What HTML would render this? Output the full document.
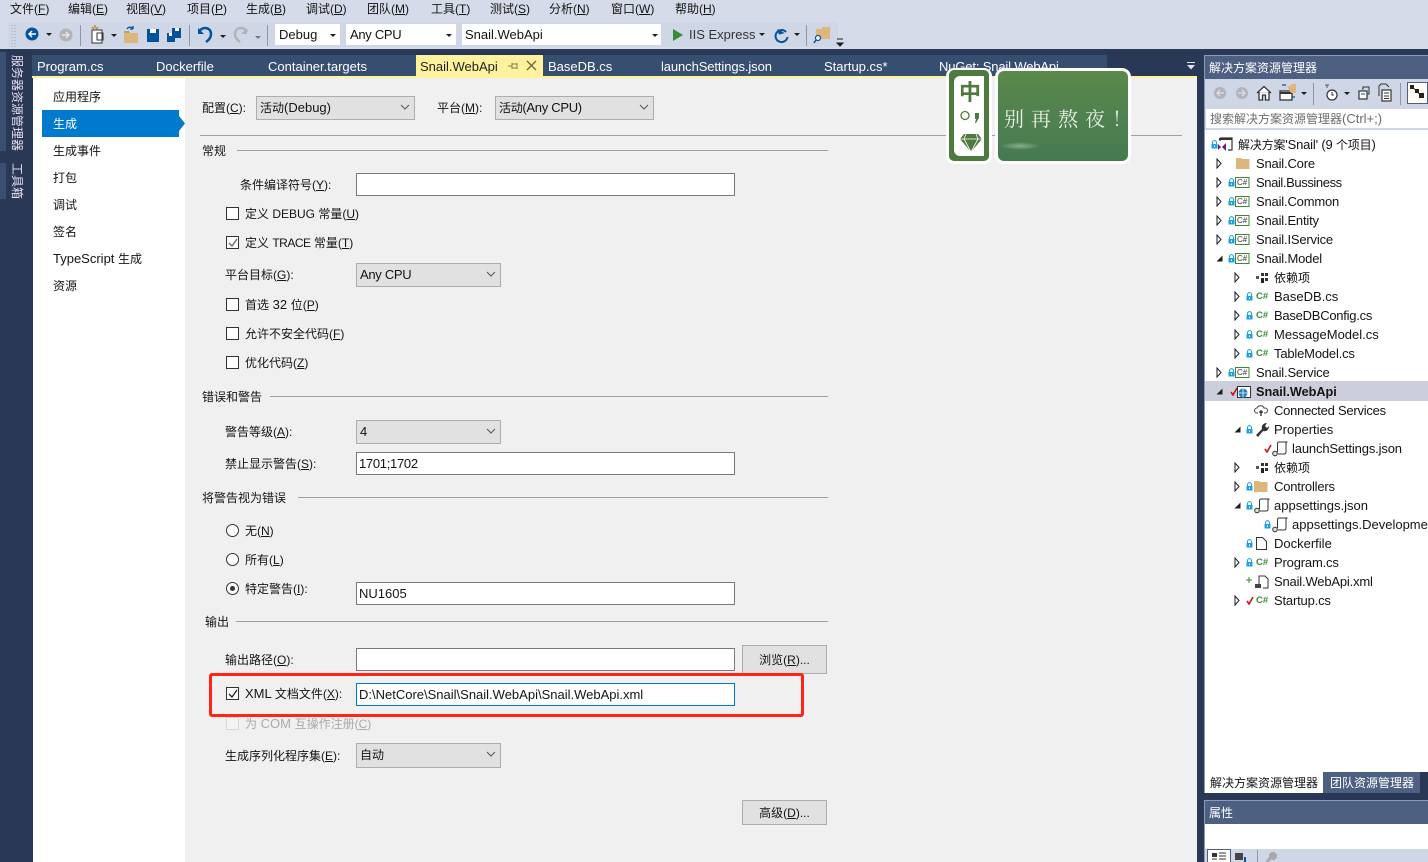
<!DOCTYPE html>
<html><head><meta charset="utf-8"><style>
html,body{margin:0;padding:0}
body{width:1428px;height:862px;overflow:hidden;position:relative;background:#293955;font:13px/16px "Liberation Sans","Noto Sans CJK SC",sans-serif;color:#141414}
.b{position:absolute;box-sizing:border-box}
.t{position:absolute;white-space:nowrap;line-height:16px;margin-top:1px}
.r{letter-spacing:-.18px}
i{font-style:normal;font-size:12px}
.l{background:#a0a0a0;height:1px;position:absolute}
.dd{position:absolute;box-sizing:border-box;background:#e1e1e1;border:1px solid #adadad;line-height:22px;padding-left:3px;white-space:nowrap}
.dd svg{position:absolute;right:4px;top:7px}
.in{position:absolute;box-sizing:border-box;background:#fff;border:1px solid #7a7a7a;line-height:21px;padding-left:2px;left:356px;width:379px;height:23px;white-space:nowrap}
.cb{position:absolute;box-sizing:border-box;left:226px;width:13px;height:13px;border:1px solid #333;background:#fff}
.rd{position:absolute;box-sizing:border-box;left:226px;width:13px;height:13px;border:1px solid #333;background:#fff;border-radius:50%}
.btn{position:absolute;box-sizing:border-box;left:742px;width:85px;background:#e1e1e1;border:1px solid #adadad;text-align:center;white-space:nowrap}
.m{top:0}
.tab{top:58px;color:#fff}
.s{position:absolute}
.w{color:#fff}
.ms{position:absolute;width:0;height:0;border-left:3px solid transparent;border-right:3px solid transparent;border-top:3px solid #1e1e1e}
.v{position:absolute;white-space:nowrap;writing-mode:vertical-rl;text-orientation:sideways;line-height:14px;font-size:12px;color:#e8dcf2;left:10px}
</style></head><body>
<svg width="0" height="0" style="position:absolute"><defs>
<symbol id="chev" viewBox="0 0 10 7"><path d="M1 1l4 4 4-4" fill="none" stroke="#555" stroke-width="1"/></symbol>
<symbol id="lock" viewBox="0 0 7 9"><path d="M1.500 4V2.600a2 2 0 014 0V4" fill="none" stroke="#1ba1e2" stroke-width="1"/><rect x="0.500" y="4" width="6" height="4.500" fill="#1ba1e2"/><rect x="3" y="5.500" width="1" height="1.500" fill="#fff"/></symbol>
<symbol id="exp" viewBox="0 0 7 11"><path d="M1 1v9l4-4.500z" fill="#fff" stroke="#1e1e1e" stroke-width="1"/></symbol>
<symbol id="col" viewBox="0 0 7 7"><path d="M6.500 0.500v6h-6z" fill="#1e1e1e"/></symbol>
<symbol id="proj" viewBox="0 0 15 11"><rect x="0.500" y="0.500" width="13.500" height="10" fill="#fff" stroke="#388a34"/><text x="2" y="8.200" font-size="8" font-family="Liberation Sans" fill="#333">C#</text></symbol>
<symbol id="cs" viewBox="0 0 12 9"><text x="0" y="8" font-size="9.500" font-weight="bold" font-family="Liberation Sans" fill="#388a34">C#</text></symbol>
<symbol id="fold" viewBox="0 0 14 12"><path d="M0 1h5l1 1h7.500v10H0z" fill="#dcb67a"/></symbol>
<symbol id="dep" viewBox="0 0 14 10"><rect x="7" y="0" width="3" height="3" fill="#333"/><rect x="11" y="0" width="3" height="3" fill="#333"/><rect x="2" y="3" width="3" height="3" fill="#555"/><rect x="7" y="5" width="3" height="5" fill="#222"/><rect x="11" y="5" width="3" height="3" fill="#333"/></symbol>
<symbol id="json" viewBox="0 0 16 16"><path d="M6 13h6c1.500 0 2-1 2-2V2.500c0-.7.500-1.500 1.500-1.500H7C6 1 5.500 2 5.500 3v8" fill="none" stroke="#333"/><circle cx="3" cy="12.500" r="2.300" fill="#ddd" stroke="#333"/></symbol>
<symbol id="chk" viewBox="0 0 8 9"><path d="M1 5l2 3 4-7" fill="none" stroke="#d0121a" stroke-width="1.600"/></symbol>
</defs></svg>

<!-- menu bar -->
<div class="b" style="left:0;top:0;width:1428px;height:49px;background:#d6dbe9"></div>
<div class="b" style="left:8px;top:22px;width:830px;height:25px;background:#cfd6e5"></div>
<div class="t m" style="left:10px"><i>文件(<u>F</u>)</i></div>
<div class="t m" style="left:68px"><i>编辑(<u>E</u>)</i></div>
<div class="t m" style="left:126px"><i>视图(<u>V</u>)</i></div>
<div class="t m" style="left:187px"><i>项目(<u>P</u>)</i></div>
<div class="t m" style="left:246px"><i>生成(<u>B</u>)</i></div>
<div class="t m" style="left:306px"><i>调试(<u>D</u>)</i></div>
<div class="t m" style="left:367px"><i>团队(<u>M</u>)</i></div>
<div class="t m" style="left:431px"><i>工具(<u>T</u>)</i></div>
<div class="t m" style="left:490px"><i>测试(<u>S</u>)</i></div>
<div class="t m" style="left:549px"><i>分析(<u>N</u>)</i></div>
<div class="t m" style="left:611px"><i>窗口(<u>W</u>)</i></div>
<div class="t m" style="left:675px"><i>帮助(<u>H</u>)</i></div>

<!-- toolbar -->
<svg class="s" style="left:0;top:22px" width="850" height="27">
<path d="M12 3v22M15 3v22" stroke="#9aa3b8" stroke-width="1" stroke-dasharray="1 2"/>
<circle cx="32" cy="12" r="6.500" fill="#00539c"/><path d="M36 12h-7m3-3l-3 3 3 3" stroke="#fff" stroke-width="1.500" fill="none"/>
<path d="M46 11h6l-3 3z" fill="#1e1e1e"/>
<circle cx="66" cy="13" r="6.500" fill="#b4b4b8"/><path d="M62 13h7m-3-3l3 3-3 3" stroke="#e6e6e6" stroke-width="1.500" fill="none"/>
<path d="M80.500 3v21" stroke="#8e96a8"/>
<path d="M92 8v13h10V8z" fill="#fff" stroke="#333"/><path d="M92 5l2 2M95 3v3M98 5l-2 2" stroke="#c08a2e" stroke-width="1.500"/>
<rect x="97" y="11" width="6" height="7" fill="none" stroke="#333"/>
<path d="M111 12h6l-3 3z" fill="#1e1e1e"/>
<path d="M124 11h14v10h-14z" fill="#dcb67a"/><path d="M124 11v-2h5l1 2" fill="#c9a063"/><path d="M127 7c2-3 5-2 6 0m0 0v-3m0 3h-3" stroke="#00539c" fill="none" stroke-width="1.300"/>
<path d="M147 7h12v13h-12z" fill="#00539c"/><rect x="150" y="7" width="6" height="4" fill="#fff"/>
<path d="M167 11h8v9h-8z" fill="#00539c"/><path d="M172 6h9v10h-6v-5h-3z" fill="#00539c"/><rect x="175" y="6" width="4" height="3" fill="#fff"/><rect x="169" y="11" width="3" height="3" fill="#fff"/>
<path d="M189.500 3v21" stroke="#8e96a8"/>
<path d="M199 10c3-6 12-5 12 2 0 3-2 6-5 8" fill="none" stroke="#00539c" stroke-width="2.500"/><path d="M198 6v6h6z" fill="#00539c"/>
<path d="M220 13h6l-3 3z" fill="#1e1e1e"/>
<path d="M235 10c3-6 12-5 12 2 0 3-2 6-5 8" fill="none" stroke="#b4b4b8" stroke-width="2.500" transform="matrix(-1 0 0 1 482 0)"/><path d="M247 6v6h-6z" fill="#b4b4b8"/>
<path d="M255 14h6l-3 3z" fill="#777"/>
<path d="M267.500 3v21" stroke="#8e96a8"/>
<path d="M673 7v12l10-6z" fill="#388a34"/>
<path d="M759 11h6l-3 3z" fill="#1e1e1e"/>
<path d="M786 10a6 6 0 10 1.500 5" fill="none" stroke="#00539c" stroke-width="2"/><path d="M778 6v6h6z" fill="#00539c" transform="rotate(-15 781 9)"/>
<path d="M794 11h6l-3 3z" fill="#1e1e1e"/>
<path d="M806.500 3v21" stroke="#8e96a8"/>
<path d="M816 7h6v-2h8v12h-14z" fill="#dcb67a"/><circle cx="818" cy="16" r="2.500" fill="#fff" stroke="#00539c" stroke-width="1.200"/><path d="M816 18l-2 3" stroke="#00539c" stroke-width="1.500"/>
<path d="M837 17h6M837 21h6l-3 3h0z" stroke="#1e1e1e" fill="#1e1e1e"/>
</svg>
<div class="b" style="left:275px;top:24px;width:65px;height:21px;background:#fff;padding-left:4px;line-height:21px">Debug</div><div class="ms" style="left:330px;top:34px"></div>
<div class="b" style="left:346px;top:24px;width:110px;height:21px;background:#fff;padding-left:4px;line-height:21px;letter-spacing:-.3px">Any CPU</div><div class="ms" style="left:446px;top:34px"></div>
<div class="b" style="left:462px;top:24px;width:199px;height:21px;background:#fff;padding-left:3px;line-height:21px">Snail.WebApi</div><div class="ms" style="left:652px;top:34px"></div>
<div class="t" style="left:689px;top:26px;color:#333">IIS Express</div>

<!-- left strip -->
<div class="b" style="left:0;top:52px;width:6px;height:99px;background:#3a4f72"></div>
<div class="b" style="left:0;top:163px;width:6px;height:36px;background:#3a4f72"></div>
<div class="v" style="top:55px">服务器资源管理器</div>
<div class="v" style="top:163px">工具箱</div>

<!-- tabs -->
<div class="b" style="left:32px;top:55px;width:1075px;height:21px;background:#364e6f"></div>
<div class="b" style="left:32px;top:76px;width:1165px;height:2px;background:#fff29d"></div>
<div class="b" style="left:416px;top:55px;width:127px;height:21px;background:#fff29d"></div>
<div class="t tab" style="left:37px">Program.cs</div>
<div class="t tab" style="left:156px">Dockerfile</div>
<div class="t tab" style="left:268px">Container.targets</div>
<div class="t tab" style="left:420px;color:#1e1e1e">Snail.WebApi</div>
<div class="t tab" style="left:548px">BaseDB.cs</div>
<div class="t tab" style="left:661px;letter-spacing:-.1px">launchSettings.json</div>
<div class="t tab" style="left:824px">Startup.cs*</div>
<div class="t tab" style="left:939px;letter-spacing:-.15px">NuGet: Snail.WebApi</div>
<svg class="s" style="left:505px;top:59px" width="36" height="14"><path d="M3 7h4M7 4v6M7 5h5v4H7M12 4v6" fill="none" stroke="#8a7c46"/><path d="M22 2l9 9M31 2l-9 9" stroke="#6b6442" stroke-width="1.300"/></svg>
<svg class="s" style="left:1186px;top:62px" width="10" height="9"><path d="M1 0.500h8" stroke="#dfe3ee"/><path d="M1 3h8L5 7.500z" fill="#dfe3ee"/></svg>

<!-- content -->
<div class="b" style="left:33px;top:78px;width:1164px;height:784px;background:#f0f0f0"></div>
<div class="b" style="left:33px;top:78px;width:152px;height:784px;background:#fff"></div>
<div class="b" style="left:42px;top:110px;width:137px;height:27px;background:#007acc"></div>
<svg class="s" style="left:179px;top:116px" width="6" height="15"><path d="M0 0l6 7.500-6 7.500z" fill="#007acc"/></svg>
<div class="t" style="left:53px;top:88px"><i>应用程序</i></div>
<div class="t" style="left:53px;top:115px;color:#fff"><i>生成</i></div>
<div class="t" style="left:53px;top:142px"><i>生成事件</i></div>
<div class="t" style="left:53px;top:169px"><i>打包</i></div>
<div class="t" style="left:53px;top:196px"><i>调试</i></div>
<div class="t" style="left:53px;top:223px"><i>签名</i></div>
<div class="t" style="left:53px;top:250px">TypeScript <i>生成</i></div>
<div class="t" style="left:53px;top:277px"><i>资源</i></div>

<!-- form -->
<div class="t" style="left:202px;top:99px"><i>配置(<u>C</u>):</i></div>
<div class="dd" style="left:256px;top:96px;width:159px;height:24px"><i>活动</i>(Debug)<svg width="10" height="7"><use href="#chev"/></svg></div>
<div class="t" style="left:437px;top:99px"><i>平台(<u>M</u>):</i></div>
<div class="dd" style="left:495px;top:96px;width:159px;height:24px;letter-spacing:-.3px"><i>活动</i>(Any CPU)<svg width="10" height="7"><use href="#chev"/></svg></div>
<div class="l" style="left:200px;top:135px;width:982px"></div>

<div class="t" style="left:202px;top:142px"><i>常规</i></div><div class="l" style="left:237px;top:150px;width:591px"></div>
<div class="t" style="left:240px;top:176px"><i>条件编译符号(<u>Y</u>):</i></div>
<div class="in" style="top:173px"></div>
<div class="cb" style="top:207px"></div>
<div class="t" style="left:245px;top:205px"><i>定义 DEBUG 常量(<u>U</u>)</i></div>
<div class="cb" style="top:236px"><svg class="s" style="left:1px;top:1px" width="10" height="10"><path d="M1 5l3 3 5-7" fill="none" stroke="#666" stroke-width="1.300"/></svg></div>
<div class="t" style="left:245px;top:234px"><i>定义 <span style="letter-spacing:-.5px">TRACE</span> 常量(<u>T</u>)</i></div>
<div class="t" style="left:225px;top:266px"><i>平台目标(<u>G</u>):</i></div>
<div class="dd" style="left:356px;top:263px;width:145px;height:24px;letter-spacing:-.3px">Any CPU<svg width="10" height="7"><use href="#chev"/></svg></div>
<div class="cb" style="top:298px"></div>
<div class="t" style="left:245px;top:296px"><i>首选</i> 32 <i>位(<u>P</u>)</i></div>
<div class="cb" style="top:327px"></div>
<div class="t" style="left:245px;top:325px"><i>允许不安全代码(<u>F</u>)</i></div>
<div class="cb" style="top:356px"></div>
<div class="t" style="left:245px;top:354px"><i>优化代码(<u>Z</u>)</i></div>

<div class="t" style="left:202px;top:388px"><i>错误和警告</i></div><div class="l" style="left:270px;top:396px;width:558px"></div>
<div class="t" style="left:225px;top:423px"><i>警告等级(<u>A</u>):</i></div>
<div class="dd" style="left:356px;top:420px;width:145px;height:24px">4<svg width="10" height="7"><use href="#chev"/></svg></div>
<div class="t" style="left:225px;top:455px"><i>禁止显示警告(<u>S</u>):</i></div>
<div class="in" style="top:452px;letter-spacing:-.3px">1701;1702</div>

<div class="t" style="left:202px;top:489px"><i>将警告视为错误</i></div><div class="l" style="left:298px;top:497px;width:530px"></div>
<div class="rd" style="top:524px"></div>
<div class="t" style="left:245px;top:522px"><i>无(<u>N</u>)</i></div>
<div class="rd" style="top:553px"></div>
<div class="t" style="left:245px;top:551px"><i>所有(<u>L</u>)</i></div>
<div class="rd" style="top:582px"><div class="b" style="left:3px;top:3px;width:5px;height:5px;border-radius:50%;background:#333"></div></div>
<div class="t" style="left:245px;top:580px"><i>特定警告(<u>I</u>):</i></div>
<div class="in" style="top:582px">NU1605</div>

<div class="t" style="left:205px;top:613px"><i>输出</i></div><div class="l" style="left:236px;top:621px;width:592px"></div>
<div class="t" style="left:225px;top:651px"><i>输出路径(<u>O</u>):</i></div>
<div class="in" style="top:648px"></div>
<div class="btn" style="top:645px;height:29px;line-height:27px"><i>浏览(<u>R</u>)...</i></div>
<div class="cb" style="top:687px"><svg class="s" style="left:1px;top:1px" width="10" height="10"><path d="M1 5l3 3 5-7" fill="none" stroke="#222" stroke-width="1.300"/></svg></div>
<div class="t" style="left:245px;top:685px">XML <i>文档文件(<u>X</u>):</i></div>
<div class="in" style="top:683px;border-color:#0078d7">D:\NetCore\Snail\Snail.WebApi\Snail.WebApi.xml</div>
<div class="b" style="left:209px;top:673px;width:595px;height:44px;border:3px solid #ff2416;border-radius:3px"></div>
<div class="cb" style="top:717px;border-color:#d8d8d8;background:#f4f4f4"></div>
<div class="t" style="left:245px;top:715px;color:#aaa"><i>为</i> COM <i>互操作注册(<u>C</u>)</i></div>
<div class="t" style="left:225px;top:747px"><i>生成序列化程序集(<u>E</u>):</i></div>
<div class="dd" style="left:356px;top:743px;width:145px;height:25px"><i>自动</i><svg width="10" height="7"><use href="#chev"/></svg></div>
<div class="btn" style="top:800px;height:25px;line-height:23px"><i>高级(<u>D</u>)...</i></div>

<!-- sticker -->
<div class="b" style="left:946px;top:68px;width:46px;height:96px;background:#fff;border-radius:8px"></div>
<div class="b" style="left:949px;top:70px;width:40px;height:91px;background:#4f7a3e;border-radius:5px"></div>
<div class="b" style="left:954px;top:76px;width:30px;height:80px;background:#fff;border-radius:6px 0 0 6px"></div>
<div class="t" style="left:959px;top:80px;font-size:22px;line-height:24px;font-weight:bold;color:#4f7a3e">中</div>
<svg class="s" style="left:958px;top:108px" width="26" height="50"><circle cx="7" cy="7.500" r="4" fill="none" stroke="#4f7a3e" stroke-width="1.300"/><path d="M17 5h4v5l-3 5h-1l1-4h-1z" fill="#4f7a3e"/><path d="M6 26h14l4 5-11 13L2 31z" fill="#4f7a3e"/><path d="M2 31h22M8 26l-2 5 7 13 7-13-2-5" stroke="#fff" fill="none" stroke-width=".8"/></svg>
<div class="b" style="left:995px;top:68px;width:136px;height:96px;background:#fff;border-radius:9px"></div>
<div class="b" style="left:998px;top:71px;width:130px;height:90px;border-radius:6px;background:radial-gradient(ellipse 20px 4px at 22px 75px,rgba(190,215,190,.55),rgba(190,215,190,0)),linear-gradient(180deg,#5b8a4b 0%,#4f8050 55%,#457a50 100%)"></div>
<div class="t" style="left:1004px;top:104px;font:20px/26px 'Noto Serif CJK SC','Liberation Serif',serif;color:#e8efe0;letter-spacing:7px">别再熬夜！</div>

<!-- right panel -->
<div class="b" style="left:1204px;top:55px;width:224px;height:738px;background:#fff;border-left:1px solid #8a9bbc"></div>
<div class="b" style="left:1205px;top:55px;width:223px;height:24px;background:#4d6082;border-top:1px solid #8a9bbc"></div>
<div class="t w" style="left:1209px;top:59px"><i>解决方案资源管理器</i></div>
<div class="b" style="left:1205px;top:79px;width:223px;height:29px;background:#cfd6e5"></div>
<svg class="s" style="left:1205px;top:79px" width="223" height="29">
<circle cx="15" cy="14" r="6" fill="#b4b4b8"/><path d="M19 14h-7m3-3l-3 3 3 3" stroke="#dde" fill="none" stroke-width="1.300"/>
<circle cx="37" cy="14" r="6" fill="#b4b4b8"/><path d="M33 14h7m-3-3l3 3-3 3" stroke="#dde" fill="none" stroke-width="1.300"/>
<path d="M52 14l7-6.500 7 6.500M54 13v8h3.500v-5h3v5H64v-8" fill="#fff" stroke="#333" stroke-width="1.300"/>
<rect x="75" y="12" width="12" height="9" fill="#fff" stroke="#333" stroke-width="1.300"/><path d="M75 14h12" stroke="#333" stroke-width="2"/><path d="M82 7h4V5h5v9h-5z" fill="#dcb67a"/><path d="M77 6h4M90 18h-3" stroke="#00539c" stroke-width="1.300"/>
<path d="M96 13h6l-3 3z" fill="#1e1e1e"/>
<path d="M108.500 4v22" stroke="#8e96a8"/>
<circle cx="127" cy="16" r="5" fill="#fff" stroke="#333" stroke-width="1.200"/><path d="M127 13v3h2" stroke="#333" fill="none"/><path d="M120 6h4M122 6v3" stroke="#555"/>
<path d="M139 13h6l-3 3z" fill="#1e1e1e"/>
<rect x="154" y="12" width="8" height="8" fill="#fff" stroke="#333" stroke-width="1.200"/><path d="M157 10h1V8h6v7h-2" fill="none" stroke="#333"/><path d="M156 15h4" stroke="#00539c"/>
<rect x="177" y="11" width="9" height="11" fill="#fff" stroke="#333" stroke-width="1.200"/><path d="M174 17V7l2-2h5l3 3" fill="none" stroke="#333"/><path d="M179 14h5M179 17h5M179 19.500h5" stroke="#333"/>
<path d="M195.500 4v22" stroke="#8e96a8"/>
<rect x="202.500" y="3.500" width="20" height="21" fill="#fffcf4" stroke="#4d6082"/><path d="M207 8l5 4 3 4" stroke="#333"/><rect x="205" y="6" width="4" height="4" fill="#222"/><rect x="210" y="10" width="4" height="4" fill="#222"/><rect x="214" y="14" width="5" height="5" fill="#222"/>
</svg>
<div class="b" style="left:1205px;top:108px;width:223px;height:22px;background:#fff;border:1px solid #cfd6e5;border-width:1px 0 2px 1px;padding-left:4px;line-height:19px;color:#6d6d6d;white-space:nowrap"><i>搜索解决方案资源管理器</i>(Ctrl+;)</div>

<!-- tree -->
<div class="b" style="left:1205px;top:381px;width:223px;height:20px;background:#ccceDB"></div>

<svg class="s" style="left:1211px;top:140px" width="7" height="9"><use href="#lock"/></svg>
<svg class="s" style="left:1217px;top:137px" width="16" height="15"><path d="M3 1h12v12h-4M3 1v3" fill="none" stroke="#333" stroke-width="1.200"/><rect x="2" y="1" width="13" height="2" fill="#333"/><path d="M1 7l3 3-3 3zM9 6v8l-4-4z" fill="#68217a"/></svg>
<div class="t r" style="left:1238px;top:136px"><i>解决方案</i>'Snail' (9 <i>个项目</i>)</div>

<svg class="s" style="left:1216px;top:158px" width="7" height="11"><use href="#exp"/></svg>
<svg class="s" style="left:1236px;top:157px" width="14" height="12"><use href="#fold"/></svg>
<div class="t r" style="left:1256px;top:155px">Snail.Core</div>

<svg class="s" style="left:1216px;top:177px" width="7" height="11"><use href="#exp"/></svg><svg class="s" style="left:1228px;top:178px" width="7" height="9"><use href="#lock"/></svg><svg class="s" style="left:1235px;top:177px" width="15" height="11"><use href="#proj"/></svg>
<div class="t" style="left:1256px;top:174px;letter-spacing:-.4px">Snail.Bussiness</div>
<svg class="s" style="left:1216px;top:196px" width="7" height="11"><use href="#exp"/></svg><svg class="s" style="left:1228px;top:197px" width="7" height="9"><use href="#lock"/></svg><svg class="s" style="left:1235px;top:196px" width="15" height="11"><use href="#proj"/></svg>
<div class="t r" style="left:1256px;top:193px">Snail.Common</div>
<svg class="s" style="left:1216px;top:215px" width="7" height="11"><use href="#exp"/></svg><svg class="s" style="left:1228px;top:216px" width="7" height="9"><use href="#lock"/></svg><svg class="s" style="left:1235px;top:215px" width="15" height="11"><use href="#proj"/></svg>
<div class="t r" style="left:1256px;top:212px">Snail.Entity</div>
<svg class="s" style="left:1216px;top:234px" width="7" height="11"><use href="#exp"/></svg><svg class="s" style="left:1228px;top:235px" width="7" height="9"><use href="#lock"/></svg><svg class="s" style="left:1235px;top:234px" width="15" height="11"><use href="#proj"/></svg>
<div class="t r" style="left:1256px;top:231px">Snail.IService</div>
<svg class="s" style="left:1216px;top:255px" width="7" height="7"><use href="#col"/></svg><svg class="s" style="left:1228px;top:254px" width="7" height="9"><use href="#lock"/></svg><svg class="s" style="left:1235px;top:253px" width="15" height="11"><use href="#proj"/></svg>
<div class="t r" style="left:1256px;top:250px">Snail.Model</div>

<svg class="s" style="left:1234px;top:272px" width="7" height="11"><use href="#exp"/></svg><svg class="s" style="left:1254px;top:273px" width="14" height="10"><use href="#dep"/></svg>
<div class="t" style="left:1274px;top:269px"><i>依赖项</i></div>
<svg class="s" style="left:1234px;top:291px" width="7" height="11"><use href="#exp"/></svg><svg class="s" style="left:1246px;top:292px" width="7" height="9"><use href="#lock"/></svg><svg class="s" style="left:1256px;top:291px" width="12" height="9"><use href="#cs"/></svg>
<div class="t" style="left:1274px;top:288px">BaseDB.cs</div>
<svg class="s" style="left:1234px;top:310px" width="7" height="11"><use href="#exp"/></svg><svg class="s" style="left:1246px;top:311px" width="7" height="9"><use href="#lock"/></svg><svg class="s" style="left:1256px;top:310px" width="12" height="9"><use href="#cs"/></svg>
<div class="t" style="left:1274px;top:307px;letter-spacing:-.25px">BaseDBConfig.cs</div>
<svg class="s" style="left:1234px;top:329px" width="7" height="11"><use href="#exp"/></svg><svg class="s" style="left:1246px;top:330px" width="7" height="9"><use href="#lock"/></svg><svg class="s" style="left:1256px;top:329px" width="12" height="9"><use href="#cs"/></svg>
<div class="t" style="left:1274px;top:326px">MessageModel.cs</div>
<svg class="s" style="left:1234px;top:348px" width="7" height="11"><use href="#exp"/></svg><svg class="s" style="left:1246px;top:349px" width="7" height="9"><use href="#lock"/></svg><svg class="s" style="left:1256px;top:348px" width="12" height="9"><use href="#cs"/></svg>
<div class="t r" style="left:1274px;top:345px">TableModel.cs</div>

<svg class="s" style="left:1216px;top:367px" width="7" height="11"><use href="#exp"/></svg><svg class="s" style="left:1228px;top:368px" width="7" height="9"><use href="#lock"/></svg><svg class="s" style="left:1235px;top:367px" width="15" height="11"><use href="#proj"/></svg>
<div class="t r" style="left:1256px;top:364px">Snail.Service</div>

<svg class="s" style="left:1216px;top:388px" width="7" height="7"><use href="#col"/></svg><svg class="s" style="left:1230px;top:387px" width="8" height="9"><use href="#chk"/></svg>
<svg class="s" style="left:1236px;top:385px" width="15" height="14"><rect x="1.500" y="1.500" width="13" height="11" fill="#fff" stroke="#333"/><circle cx="7" cy="8" r="4.500" fill="#1a7fc4"/><path d="M2.500 8h9M7 3.500v9" stroke="#fff" stroke-width=".8"/></svg>
<div class="t" style="left:1256px;top:383px;font-weight:bold;font-size:12.700px">Snail.WebApi</div>

<svg class="s" style="left:1254px;top:404px" width="15" height="13"><path d="M4 9H3a2.500 2.500 0 010-5c1-3 6-3 7 0h1a2.500 2.500 0 010 5h-1" fill="none" stroke="#444"/><path d="M7 6v6M5 8h4" stroke="#222" stroke-width="1.300"/></svg>
<div class="t" style="left:1274px;top:402px;letter-spacing:-.25px">Connected Services</div>
<svg class="s" style="left:1234px;top:426px" width="7" height="7"><use href="#col"/></svg><svg class="s" style="left:1246px;top:425px" width="7" height="9"><use href="#lock"/></svg>
<svg class="s" style="left:1254px;top:422px" width="15" height="15"><path d="M2 13l6-6c-1-3 1-6 5-6l-2 3 2 2 2-2c0 4-3 6-6 5l-5 6z" fill="#333"/></svg>
<div class="t" style="left:1274px;top:421px">Properties</div>
<svg class="s" style="left:1264px;top:444px" width="8" height="9"><use href="#chk"/></svg><svg class="s" style="left:1272px;top:441px" width="16" height="16"><use href="#json"/></svg>
<div class="t" style="left:1292px;top:440px;letter-spacing:-.15px">launchSettings.json</div>
<svg class="s" style="left:1234px;top:462px" width="7" height="11"><use href="#exp"/></svg><svg class="s" style="left:1254px;top:463px" width="14" height="10"><use href="#dep"/></svg>
<div class="t" style="left:1274px;top:459px"><i>依赖项</i></div>
<svg class="s" style="left:1234px;top:481px" width="7" height="11"><use href="#exp"/></svg><svg class="s" style="left:1246px;top:482px" width="7" height="9"><use href="#lock"/></svg><svg class="s" style="left:1254px;top:480px" width="14" height="12"><use href="#fold"/></svg>
<div class="t r" style="left:1274px;top:478px">Controllers</div>
<svg class="s" style="left:1234px;top:502px" width="7" height="7"><use href="#col"/></svg><svg class="s" style="left:1246px;top:501px" width="7" height="9"><use href="#lock"/></svg><svg class="s" style="left:1254px;top:498px" width="16" height="16"><use href="#json"/></svg>
<div class="t" style="left:1274px;top:497px">appsettings.json</div>
<svg class="s" style="left:1264px;top:520px" width="7" height="9"><use href="#lock"/></svg><svg class="s" style="left:1272px;top:517px" width="16" height="16"><use href="#json"/></svg>
<div class="t" style="left:1292px;top:516px">appsettings.Development.json</div>
<svg class="s" style="left:1246px;top:539px" width="7" height="9"><use href="#lock"/></svg><svg class="s" style="left:1256px;top:537px" width="11" height="13"><path d="M.5.500h6l4 4v8H.5z" fill="#fff" stroke="#333"/></svg>
<div class="t" style="left:1274px;top:535px">Dockerfile</div>
<svg class="s" style="left:1234px;top:557px" width="7" height="11"><use href="#exp"/></svg><svg class="s" style="left:1246px;top:558px" width="7" height="9"><use href="#lock"/></svg><svg class="s" style="left:1256px;top:557px" width="12" height="9"><use href="#cs"/></svg>
<div class="t r" style="left:1274px;top:554px">Program.cs</div>
<svg class="s" style="left:1246px;top:575px" width="24" height="14"><path d="M3 2v6M0 5h6" stroke="#388a34"/><path d="M13 9V1h6l3 3v9h-5" fill="#fff" stroke="#333"/><rect x="9" y="9" width="6" height="4" fill="#444"/></svg>
<div class="t r" style="left:1274px;top:573px">Snail.WebApi.xml</div>
<svg class="s" style="left:1234px;top:595px" width="7" height="11"><use href="#exp"/></svg><svg class="s" style="left:1246px;top:596px" width="8" height="9"><use href="#chk"/></svg><svg class="s" style="left:1256px;top:595px" width="12" height="9"><use href="#cs"/></svg>
<div class="t r" style="left:1274px;top:592px">Startup.cs</div>

<!-- bottom tabs -->
<div class="b" style="left:1205px;top:772px;width:118px;height:21px;background:#fff"></div>
<div class="t" style="left:1210px;top:774px"><i>解决方案资源管理器</i></div>
<div class="b" style="left:1323px;top:772px;width:97px;height:21px;background:#4d6082"></div>
<div class="b" style="left:1420px;top:772px;width:8px;height:21px;background:#293955"></div>
<div class="t w" style="left:1330px;top:774px"><i>团队资源管理器</i></div>

<!-- properties -->
<div class="b" style="left:1204px;top:800px;width:224px;height:62px;background:#fff;border-left:1px solid #8a9bbc;border-top:1px solid #8a9bbc"></div>
<div class="b" style="left:1205px;top:801px;width:223px;height:23px;background:#4d6082"></div>
<div class="t w" style="left:1209px;top:804px"><i>属性</i></div>
<div class="b" style="left:1205px;top:849px;width:223px;height:13px;background:#cfd6e5"></div>
<svg class="s" style="left:1207px;top:849px" width="70" height="13"><rect x=".5" y=".5" width="23" height="13" fill="#fff" stroke="#4d6082"/><rect x="5" y="4" width="5" height="4" fill="#333"/><path d="M12 4h7M12 7h7M12 10h7M5 10h5" stroke="#333"/><rect x="28" y="4" width="8" height="7" fill="#444"/><path d="M38 8v5" stroke="#00539c" stroke-width="2"/><path d="M50.500 1v12" stroke="#8e96a8"/><circle cx="66" cy="7" r="4" fill="#a8a8a8"/><path d="M60 13l3-4" stroke="#a8a8a8" stroke-width="3"/></svg>
</body></html>
